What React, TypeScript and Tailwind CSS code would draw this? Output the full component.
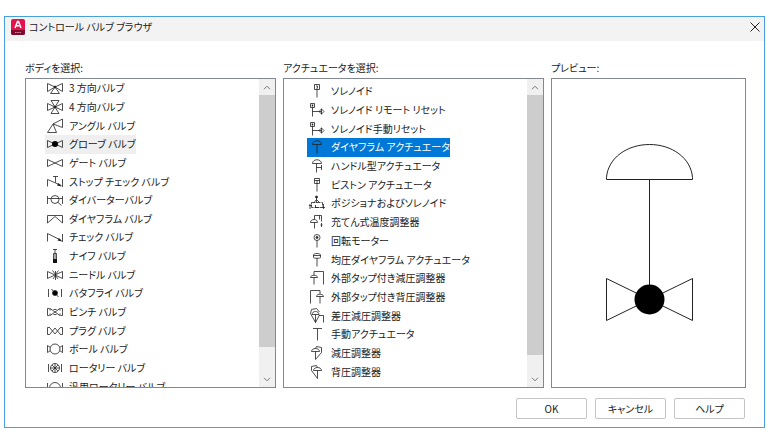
import { useState } from 'react';
import type { ReactNode } from 'react';
import clsx from 'clsx';

type Item = {
  name: string;
  icon: ReactNode;
};

const bowtie = <path d="M.5 4.5v7L8 8zM15.5 4.5v7L8 8z" />;

const solenoidReset = (
  <>
    <path d="M1.5 1.5h4v4h-4zM3.5 5.5v9M3.5 9.5h9" />
    <path d="M3.5 2.5v2" strokeWidth="1.5" />
    <path d="M10 9.5l2.5-2.5L15 9.5 12.5 12zM12.5 6.5v6" />
  </>
);

const bodies: Item[] = [
  {
    name: '3 方向バルブ',
    icon: (
      <>
        <path d="M.5 3.5v8L8 7zM15.5 3.5v8L8 7zM8 7l-4.5 6.5h9z" />
        <circle cx="8" cy="7" r="1" fill="#222" />
      </>
    ),
  },
  {
    name: '4 方向バルブ',
    icon: (
      <>
        <path d="M.5 4.5v7L8 8zM15.5 4.5v7L8 8zM8 8l-4 6.5h8zM8 8L4 1.5h8z" />
        <circle cx="8" cy="8" r="1" fill="#222" />
      </>
    ),
  },
  { name: 'アングル バルブ', icon: <path d="M.5 14.5L6 6l3.5 8.5zM6 6l9.5-5v8.5z" /> },
  {
    name: 'グローブ バルブ',
    icon: (
      <>
        {bowtie}
        <circle cx="8" cy="8" r="3" fill="#000" stroke="none" />
      </>
    ),
  },
  { name: 'ゲート バルブ', icon: bowtie },
  {
    name: 'ストップ チェック バルブ',
    icon: (
      <>
        <path d="M.5 12.5v-7l14 6M15.5 5v8M8.5 8.5v-6M6 2.5h5" />
        <path d="M14.5 12.5l-4.5-1L11.5 9z" fill="#222" stroke="none" />
      </>
    ),
  },
  {
    name: 'ダイバーターバルブ',
    icon: (
      <>
        <path d="M.5 4v8M15.5 4v8M.5 6.5h15M10.5 10l4 3.5" />
        <circle cx="8" cy="7.5" r="4" />
      </>
    ),
  },
  { name: 'ダイヤフラム バルブ', icon: <path d="M.5 12V4.5h15V12L8 5.5z" /> },
  {
    name: 'チェック バルブ',
    icon: (
      <>
        <path d="M.5 12.5v-8l14 7M15.5 5v8" />
        <path d="M15 12.5l-4.5-1L12 9z" fill="#222" stroke="none" />
      </>
    ),
  },
  {
    name: 'ナイフ バルブ',
    icon: (
      <>
        <path d="M6 1.5h4M8 1v10M6.5 5.5h3v9h-3z" />
        <path d="M6 11h4v4H6z" fill="#111" stroke="none" />
      </>
    ),
  },
  {
    name: 'ニードル バルブ',
    icon: (
      <>
        {bowtie}
        <path d="M8.5 4v9M5.5 3.5l3 4 3-4M6 12l2.5-3.5L11 12" />
      </>
    ),
  },
  {
    name: 'バタフライ バルブ',
    icon: (
      <>
        <path d="M1.5 4v8M14.5 4v8M4.5 4l7 8" />
        <circle cx="8" cy="8" r="2.5" fill="#000" />
      </>
    ),
  },
  {
    name: 'ピンチ バルブ',
    icon: (
      <>
        <path d="M3 4.5l10 7M13 4.5l-10 7M3 4.5v2M3 9.5v2M13 4.5v2M13 9.5v2" />
        <path d="M.5 4.5h2M.5 4.5v7h2M15.5 4.5h-2M15.5 4.5v7h-2M6.5 5.5h3M6.5 10.5h3" />
      </>
    ),
  },
  { name: 'プラグ バルブ', icon: <path d="M3 4.5H.5v7H3M13 4.5h2.5v7H13M3 5l5 6 5-6M3 11l5-6 5 6" /> },
  {
    name: 'ボール バルブ',
    icon: (
      <>
        <path d="M.5 4.5v7l3-2v-3zM15.5 4.5v7l-3-2v-3z" />
        <circle cx="8" cy="8" r="5" fill="#fff" />
      </>
    ),
  },
  {
    name: 'ロータリー バルブ',
    icon: (
      <>
        <path d="M1.5 4v8M14.5 4v8M8 3.5v9M3.5 8h9M5 5l6 6M11 5l-6 6" />
        <circle cx="8" cy="8" r="4.5" />
      </>
    ),
  },
  {
    name: '汎用ロータリー バルブ',
    icon: (
      <>
        <path d="M.5 4v8M15.5 4v8" />
        <circle cx="8" cy="9" r="5.5" />
      </>
    ),
  },
];

const actuators: Item[] = [
  {
    name: 'ソレノイド',
    icon: (
      <>
        <path d="M5.5 1.5h5v5h-5zM8 6.5v8" />
        <path d="M7 3h1.5v1.5H8V6" />
      </>
    ),
  },
  { name: 'ソレノイド リモート リセット', icon: solenoidReset },
  { name: 'ソレノイド手動リセット', icon: solenoidReset },
  { name: 'ダイヤフラム アクチュエータ', icon: <path d="M3.5 5.5c0-5 9-5 9 0zM8 5.5v9" /> },
  { name: 'ハンドル型アクチュエータ', icon: <path d="M3.5 5.5c0-5 9-5 9 0zM7.5 5.5v9M7.5 9.5h5M12.5 7v5" /> },
  { name: 'ピストン アクチュエータ', icon: <path d="M5.5 1.5h5v5h-5zM5.5 3.5h5M8 3.5v11" /> },
  {
    name: 'ポジショナおよびソレノイド',
    icon: (
      <>
        <path d="M2.5 7.5h11v5h-11z" strokeDasharray="4 1" />
        <path d="M7.5 3v5M5 7.5l2.5-3 3 3M0 10.5h3M13 12.5h3M6 12.5h4M1 9v5M14.5 9v5M6.5 10v3" />
        <circle cx="7.5" cy="2" r="1" fill="#111" />
      </>
    ),
  },
  { name: '充てん式温度調整器', icon: <path d="M1.5 8.5c0-4 7-4 7 0zM5.5 8.5v6M5.5 5V1.5h7v6M10.5 1.5v4M12.5 9v4M11.5 11h2" /> },
  {
    name: '回転モーター',
    icon: (
      <>
        <circle cx="8" cy="4.5" r="3" />
        <circle cx="8" cy="4.5" r="1" fill="#222" />
        <path d="M8 7.5v7" />
      </>
    ),
  },
  { name: '均圧ダイヤフラム アクチュエータ', icon: <path d="M4.5 3c0-2 7-2 7 0v2.5c0 1-7 1-7 0zM4.5 3.5h7M8 6v8.5" /> },
  { name: '外部タップ付き減圧調整器', icon: <path d="M1.5 7.5c0-3 7-3 7 0zM5 7.5v7M5 5V1.5h9.5v13" /> },
  { name: '外部タップ付き背圧調整器', icon: <path d="M7.5 7.5c0-3 7-3 7 0zM11 7.5v7M11 5V1.5H1.5v13" /> },
  { name: '差圧減圧調整器', icon: <path d="M6.5 14.5V6.5M3 6.5c0-4 7-4 7 0zM6.5 14.5l-5-9 1-4 5-1 3 3.500M10.5 7l-4 7.5M10 7.500h4.500v7" /> },
  { name: '手動アクチュエータ', icon: <path d="M4 2.5h9M8.5 2.5v12" /> },
  { name: '減圧調整器', icon: <path d="M2.5 6.5c0-4 8-4 8 0zM6.5 6.5v8l6-7v-5l-5-1-1 2" /> },
  { name: '背圧調整器', icon: <path d="M4.5 6.5c0-4 8-4 8 0zM8.5 6.5v8l-6-8v-4l5-1 1 2" /> },
];

function Chevron({ up = false }: { up?: boolean }) {
  return (
    <svg viewBox="0 0 8 5" className="h-[5px] w-2" fill="none" stroke="#777">
      <path d={up ? 'M1 4.2l3-3 3 3' : 'M1 .8l3 3 3-3'} />
    </svg>
  );
}

function Scrollbar({ thumb }: { thumb: string }) {
  return (
    <div className="flex w-4 shrink-0 flex-col items-center bg-[#f0f0f0]">
      <button type="button" aria-label="上へ" className="flex h-4 items-center justify-center">
        <Chevron up />
      </button>
      <div className={clsx('w-full bg-[#cdcdcd]', thumb)} />
      <button type="button" aria-label="下へ" className="mt-auto flex h-4 items-center justify-center">
        <Chevron />
      </button>
    </div>
  );
}

type PickListProps = {
  id: string;
  label: string;
  items: Item[];
  value: string;
  onChange: (name: string) => void;
  selectedClass: string;
  listClass: string;
  thumb: string;
};

function PickList({ id, label, items, value, onChange, selectedClass, listClass, thumb }: PickListProps) {
  return (
    <section>
      <h2 id={id} className="mb-0.5 h-4 leading-4">{label}</h2>
      <div className="flex h-[310px] overflow-hidden border border-[#828790] bg-white">
        <div role="listbox" aria-labelledby={id} className="min-w-0 flex-1 overflow-hidden">
          <div className={clsx('grid auto-rows-fr', listClass)}>
            {items.map((item) => (
              <button
                key={item.name}
                type="button"
                role="option"
                aria-selected={item.name === value}
                onClick={() => onChange(item.name)}
                className={clsx(
                  'flex min-h-0 items-center gap-1.5 justify-self-start pl-0.5 leading-4 whitespace-nowrap',
                  item.name === value && selectedClass
                )}
              >
                <svg viewBox="0 0 16 16" className="size-4 shrink-0" fill="none" stroke="#222" strokeWidth="0.8">
                  {item.icon}
                </svg>
                {item.name}
              </button>
            ))}
          </div>
        </div>
        <Scrollbar thumb={thumb} />
      </div>
    </section>
  );
}

function DialogButton({ children }: { children: ReactNode }) {
  return (
    <button type="button" className="h-[21px] w-[71px] rounded-xs border border-[#c4c4c4] bg-white text-center leading-4 hover:bg-gray-100">
      {children}
    </button>
  );
}

export default function App() {
  const [body, setBody] = useState('グローブ バルブ');
  const [actuator, setActuator] = useState('ダイヤフラム アクチュエータ');

  return (
    <div className="bg-white px-1 pt-4 pb-4 font-['Noto_Sans_CJK_JP',sans-serif] text-[10px] text-[#1a1a1a] [font-feature-settings:'palt']">
      <main className="border border-[#4a9fe3] bg-white">
        <header className="flex h-6 items-center bg-[#f3f3f3] pr-1 pb-1 pl-1.5">
          <svg viewBox="0 0 14 16" className="h-4 w-3.5">
            <rect width="14" height="16" rx="2" fill="#e5124d" />
            <path d="M0 11h14v3a2 2 0 0 1-2 2H2a2 2 0 0 1-2-2z" fill="#7d0b2c" />
            <path d="M4 9l2.5-6.5h1L10 9M5 6.8h4" fill="none" stroke="#fff" strokeWidth="1.5" />
            <path d="M4 13.5h6" stroke="#d58ba0" strokeDasharray="1.5 .7" />
          </svg>
          <h1 className="ml-1 leading-4">コントロール バルブ ブラウザ</h1>
          <button type="button" aria-label="閉じる" className="ml-auto">
            <svg viewBox="0 0 10 10" className="size-2.5" stroke="#222">
              <path d="M.5.5l9 9M9.500.5l-9 9" />
            </svg>
          </button>
        </header>

        <div className="grid grid-cols-[251fr_261fr_195fr] gap-[7px] pt-[19px] pr-[18px] pl-5">
          <PickList
            id="body-label"
            label="ボディを選択:"
            items={bodies}
            value={body}
            onChange={setBody}
            selectedClass="bg-[#efefef]"
            listClass="h-[317px] pl-[19px]"
            thumb="h-[252px]"
          />
          <PickList
            id="actuator-label"
            label="アクチュエータを選択:"
            items={actuators}
            value={actuator}
            onChange={setActuator}
            selectedClass="bg-[#0078d7] text-white"
            listClass="mt-[3px] h-[299px] pl-[23px]"
            thumb="h-[260px]"
          />
          <section className="flex flex-col">
            <h2 className="mb-0.5 h-4 leading-4">プレビュー:</h2>
            <div className="flex h-[310px] items-center justify-center border border-[#828790]">
              <svg viewBox="-1 0 88 180" className="h-[180px] w-[88px]" fill="none" stroke="#222">
                <path d="M.5 36.5v-2C2 15 21 1.500 43.500 1.500S85 15 86.500 34.500v2zM43.500 36.500V142" />
                <path d="M.5 135.500v42l43-21zM86.500 135.500v42l-43-21z" />
                <circle cx="43.5" cy="156.5" r="15" fill="#000" stroke="none" />
              </svg>
            </div>
          </section>
        </div>

        <footer className="flex justify-end gap-2 pt-2.5 pr-[19px] pb-2">
          <DialogButton>OK</DialogButton>
          <DialogButton>キャンセル</DialogButton>
          <DialogButton>ヘルプ</DialogButton>
        </footer>
      </main>
    </div>
  );
}
